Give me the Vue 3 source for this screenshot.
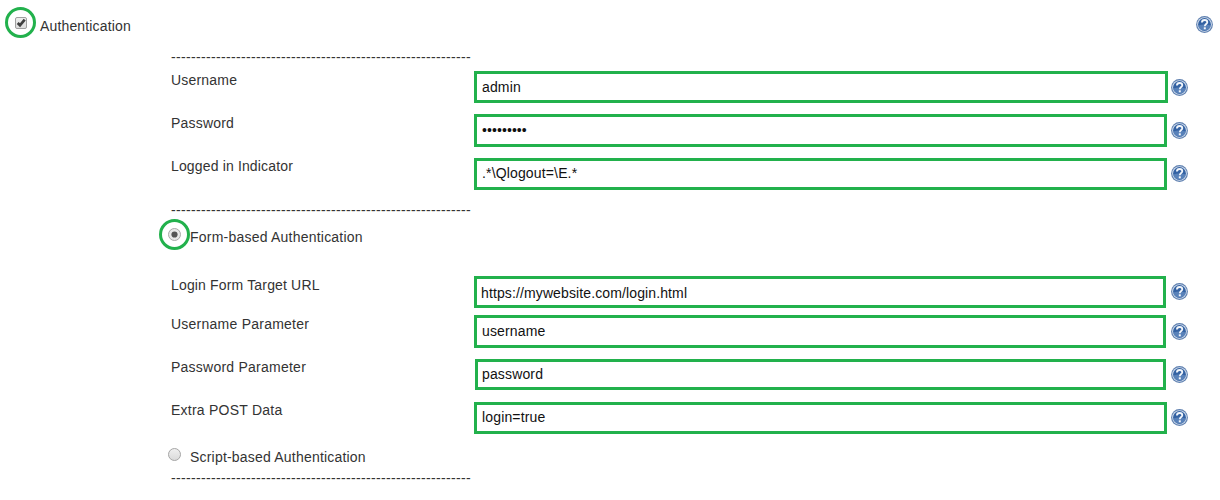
<script setup>
import { h } from 'vue'

const dashes = '-'.repeat(60)

const credentials = [
  { id: 'user', label: 'Username', value: 'admin' },
  { id: 'pass', label: 'Password', value: '•'.repeat(9) },
  { id: 'indicator', label: 'Logged in Indicator', value: '.*\\Qlogout=\\E.*' },
]

const formFields = [
  { id: 'url', label: 'Login Form Target URL', value: 'https://mywebsite.com/login.html' },
  { id: 'user-param', label: 'Username Parameter', value: 'username' },
  { id: 'pass-param', label: 'Password Parameter', value: 'password' },
  { id: 'post', label: 'Extra POST Data', value: 'login=true' },
]

const HelpIcon = () =>
  h('svg', { width: 17, height: 17, viewBox: '0 0 17 17' }, [
    h('circle', { cx: 8.5, cy: 8.5, r: 8.4, fill: '#5f80b0' }),
    h('circle', { cx: 8.5, cy: 8.5, r: 7.3, fill: '#d5e0ee' }),
    h('circle', { cx: 8.5, cy: 8.5, r: 6.4, fill: '#3462a3' }),
    h('path', { d: 'M2.4 9.4A6.2 6.2 0 0 0 14.6 9.4Q8.5 7.5 2.4 9.4Z', fill: '#7ba0d0', opacity: 0.5 }),
    h('path', {
      d: 'M5.9 6.5C5.9 4.7 7 4 8.6 4C10.3 4 11.3 4.9 11.3 6.2C11.3 8 8.8 8.1 8.8 10.3',
      fill: 'none', stroke: '#f2f6fb', 'stroke-width': 1.8,
    }),
    h('rect', { x: 7.8, y: 11.3, width: 2, height: 2, fill: '#f2f6fb' }),
  ])
</script>

<template>
  <main class="page">
    <header class="head">
      <svg class="mark" width="32" height="32" viewBox="0 0 32 32">
        <defs>
          <linearGradient id="boxFill" x1="0" y1="0" x2="0" y2="1">
            <stop offset="0" stop-color="#efefef" />
            <stop offset="1" stop-color="#dcdcdc" />
          </linearGradient>
        </defs>
        <circle cx="15.5" cy="15.5" r="14" fill="none" stroke="#22b14c" stroke-width="3" />
        <rect x="10.5" y="10.5" width="11" height="11" rx="1.5" fill="url(#boxFill)" stroke="#a0a0a0" />
        <path d="M12.7 16L15 18.3L19.7 12.6" fill="none" stroke="#404040" stroke-width="2.7" />
      </svg>
      <span class="title">Authentication</span>
      <HelpIcon class="head-help" />
    </header>

    <section class="body">
      <div class="rule">{{ dashes }}</div>

      <div v-for="f in credentials" :key="f.id" class="row" :class="f.id">
        <span class="label">{{ f.label }}</span>
        <div class="slot"><div class="field"><span class="value">{{ f.value }}</span></div></div>
        <HelpIcon class="help" />
      </div>

      <div class="rule second">{{ dashes }}</div>

      <div class="option">
        <svg class="mark" width="32" height="32" viewBox="0 0 32 32">
          <circle cx="15.5" cy="15.5" r="14" fill="none" stroke="#22b14c" stroke-width="3" />
          <circle cx="15.5" cy="15.5" r="6" fill="#e8e8e8" stroke="#a9a9a9" />
          <circle cx="15.5" cy="15.5" r="3.1" fill="#555" />
        </svg>
        <span class="option-label">Form-based Authentication</span>
      </div>

      <div v-for="f in formFields" :key="f.id" class="row" :class="f.id">
        <span class="label">{{ f.label }}</span>
        <div class="slot"><div class="field"><span class="value">{{ f.value }}</span></div></div>
        <HelpIcon class="help" />
      </div>

      <div class="option script">
        <svg class="mark" width="32" height="13" viewBox="0 0 32 13">
          <defs>
            <linearGradient id="radioFill" x1="0" y1="0" x2="0" y2="1">
              <stop offset="0" stop-color="#f0f0f0" />
              <stop offset="1" stop-color="#d9d9d9" />
            </linearGradient>
          </defs>
          <circle cx="15.5" cy="6.5" r="6" fill="url(#radioFill)" stroke="#a6a6a6" />
        </svg>
        <span class="option-label">Script-based Authentication</span>
      </div>
      <div class="rule last">{{ dashes }}</div>
    </section>
  </main>
</template>

<style>
body { background: #fff; }
</style>

<style scoped>
.page {
  box-sizing: border-box;
  width: 1220px;
  height: 500px;
  overflow: hidden;
  padding-top: 7px;
  background: #fff;
  color: #333;
  font: 14px/16px "Liberation Sans", Arial, sans-serif;
  letter-spacing: 0.2px;
  white-space: pre;
}
.page svg { display: block; flex: none; }
.head {
  display: flex;
  align-items: flex-start;
  height: 42px;
  padding-left: 5px;
}
.title { margin: 11px 0 0 3px; letter-spacing: 0.15px; }
.head-help { margin: 9px 7px 0 auto; }
.body { padding-left: 171px; }
.rule {
  height: 22px;
  letter-spacing: 0.338px;
}
.rule.second { height: 18px; }
.row {
  display: flex;
  align-items: flex-start;
  height: 43px;
}
.label { width: 303px; padding-top: 1px; }
.slot { width: 697px; }
.field {
  box-sizing: border-box;
  width: 693px;
  height: 32px;
  padding: 5px 0 0 5px;
  border: 3px solid #22b14c;
  color: #111;
  letter-spacing: 0.15px;
}
.value { display: block; }
.help { margin-top: 8px; }
.user .field { width: 694px; }
.pass .field { height: 33px; letter-spacing: 0.08px; }
.indicator { height: 45px; }
.indicator .label { letter-spacing: 0.15px; }
.indicator .field { margin-top: 1px; padding-top: 4px; }
.url { height: 40px; }
.url .label { padding-top: 2px; letter-spacing: 0.16px; }
.url .field { width: 692px; margin-top: 1px; padding: 6px 0 0 4px; letter-spacing: 0.12px; }
.user-param .field { width: 692px; height: 33px; }
.user-param .label, .pass-param .label, .post .label { letter-spacing: 0.24px; }
.pass-param .field {
  width: 691px;
  height: 31px;
  margin: 1px 0 0 1px;
  padding: 4px 0 0 4px;
}
.post .field { margin-top: 1px; padding-top: 4px; }
.option {
  display: flex;
  align-items: flex-start;
  height: 56px;
  margin: -1px 0 0 -12px;
}
.option-label { margin: 10px 0 0 -1px; letter-spacing: 0.22px; }
.option.script { height: 22px; margin-top: 4px; }
.script .option-label { margin-top: 1px; letter-spacing: 0.2px; }
</style>
